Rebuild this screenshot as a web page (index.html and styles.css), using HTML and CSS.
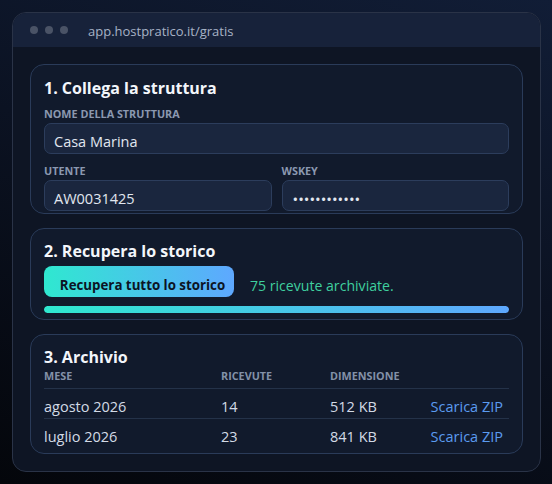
FILE: index.html
```html
<!DOCTYPE html>
<html lang="it">
<head>
<meta charset="utf-8">
<title>HostPratico - Gratis</title>
<link rel="stylesheet" href="styles.css">
</head>
<body>
<div class="window">
  <div class="titlebar">
    <span class="dots"><i></i><i></i><i></i></span>
    <span class="url">app.hostpratico.it/gratis</span>
  </div>
  <div class="content">
    <section class="card card-connect">
      <h2 class="card-title">1. Collega la struttura</h2>
      <div class="field">
        <div class="label">NOME DELLA STRUTTURA</div>
        <div class="input">Casa Marina</div>
      </div>
      <div class="field-row">
        <div class="field">
          <div class="label">UTENTE</div>
          <div class="input">AW0031425</div>
        </div>
        <div class="field">
          <div class="label">WSKEY</div>
          <div class="input input-pass">••••••••••••</div>
        </div>
      </div>
    </section>

    <section class="card card-fetch">
      <h2 class="card-title">2. Recupera lo storico</h2>
      <div class="fetch-row">
        <button class="btn">Recupera tutto lo storico</button>
        <span class="status">75 ricevute archiviate.</span>
      </div>
      <div class="progress"><div class="progress-fill" style="width:100%"></div></div>
    </section>

    <section class="card card-archive">
      <h2 class="card-title">3. Archivio</h2>
      <div class="grid-row head">
        <span>MESE</span><span>RICEVUTE</span><span>DIMENSIONE</span><span></span>
      </div>
      <div class="grid-row">
        <span>agosto 2026</span><span>14</span><span>512 KB</span><a class="link" href="#">Scarica ZIP</a>
      </div>
      <div class="grid-row last">
        <span>luglio 2026</span><span>23</span><span>841 KB</span><a class="link" href="#">Scarica ZIP</a>
      </div>
    </section>
  </div>
</div>
</body>
</html>
```

FILE: styles.css
```css
* { box-sizing: border-box; }
html, body { margin: 0; height: 100%; }
body {
  font-family: "Open Sans", "Noto Sans", sans-serif;
  background: linear-gradient(200deg, #111d36 0%, #0b1222 45%, #04060b 100%);
  width: 552px;
  height: 484px;
  overflow: hidden;
  padding: 12px 0 0 12px;
}
.window {
  width: 529px;
  height: 460px;
  border: 1px solid #2a3347;
  border-radius: 14px;
  background: #0e1524;
  overflow: hidden;
}
.titlebar {
  height: 34px;
  background: #17223a;
  display: flex;
  align-items: center;
  padding-left: 17px;
}
.dots { display: flex; gap: 7px; }
.dots i {
  display: block;
  width: 8px;
  height: 8px;
  border-radius: 50%;
  background: #4a5366;
}
.url {
  margin-left: 20px;
  padding-top: 2px;
  color: #a7b2c6;
  font-size: 13px;
}
.content {
  padding: 17px;
  display: flex;
  flex-direction: column;
  gap: 14px;
}
.card {
  border: 1px solid #2a3b59;
  border-radius: 14px;
  background: #111a2c;
  padding: 12px 13px 2px;
}
.card-title {
  margin: 0;
  font-size: 16px;
  line-height: 22px;
  font-weight: 700;
  color: #f3f6fb;
}
.label {
  font-size: 10.8px;
  line-height: 13px;
  font-weight: 700;
  color: #8b98b0;
  margin-bottom: 3px;
}
.card-connect .card-title { margin-bottom: 8px; }
.field-row {
  display: grid;
  grid-template-columns: 1fr 1fr;
  gap: 10px;
  margin-top: 10px;
}
.input {
  height: 31px;
  border: 1px solid #2c3d5c;
  border-radius: 7px;
  background: #1a263e;
  color: #e1e7f0;
  font-size: 14.5px;
  display: flex;
  align-items: center;
  padding: 6px 9px 0;
}
.input-pass {
  font-size: 15px;
  letter-spacing: 0;
  padding-left: 10px;
}
.card-fetch { padding-bottom: 6px; padding-top: 11px; }
.fetch-row {
  display: flex;
  align-items: center;
  gap: 16px;
  margin-top: 4px;
}
.btn {
  width: 190px;
  height: 31px;
  border: 0;
  border-radius: 8px;
  background: linear-gradient(90deg, #2fe8d0 0%, #5ea8ff 100%);
  color: #0c1424;
  font-family: inherit;
  font-size: 13.3px;
  font-weight: 700;
  padding: 7px 0 0 7px;
}
.status {
  color: #3fcf9f;
  font-size: 14.1px;
  padding-top: 7px;
}
.progress {
  margin-top: 9px;
  height: 7px;
  border-radius: 4px;
  background: #1a263e;
  overflow: hidden;
}
.progress-fill {
  height: 100%;
  border-radius: 4px;
  background: linear-gradient(90deg, #2fe8d0 0%, #5ea8ff 100%);
}
.card-archive { padding-bottom: 4px; padding-top: 11px; }
.grid-row {
  display: grid;
  grid-template-columns: 177px 109px 1fr auto;
  align-items: center;
  height: 30px;
  border-bottom: 1px solid #243249;
  color: #d3dae6;
  font-size: 14.5px;
  padding: 5px 6px 0 0;
}
.grid-row.last { border-bottom: 0; }
.grid-row.head {
  height: 21px;
  align-items: end;
  padding: 0 0 5px;
  font-size: 10.8px;
  font-weight: 700;
  color: #8391a8;
}
.link {
  color: #5b9bf0;
  text-decoration: none;
}
```
